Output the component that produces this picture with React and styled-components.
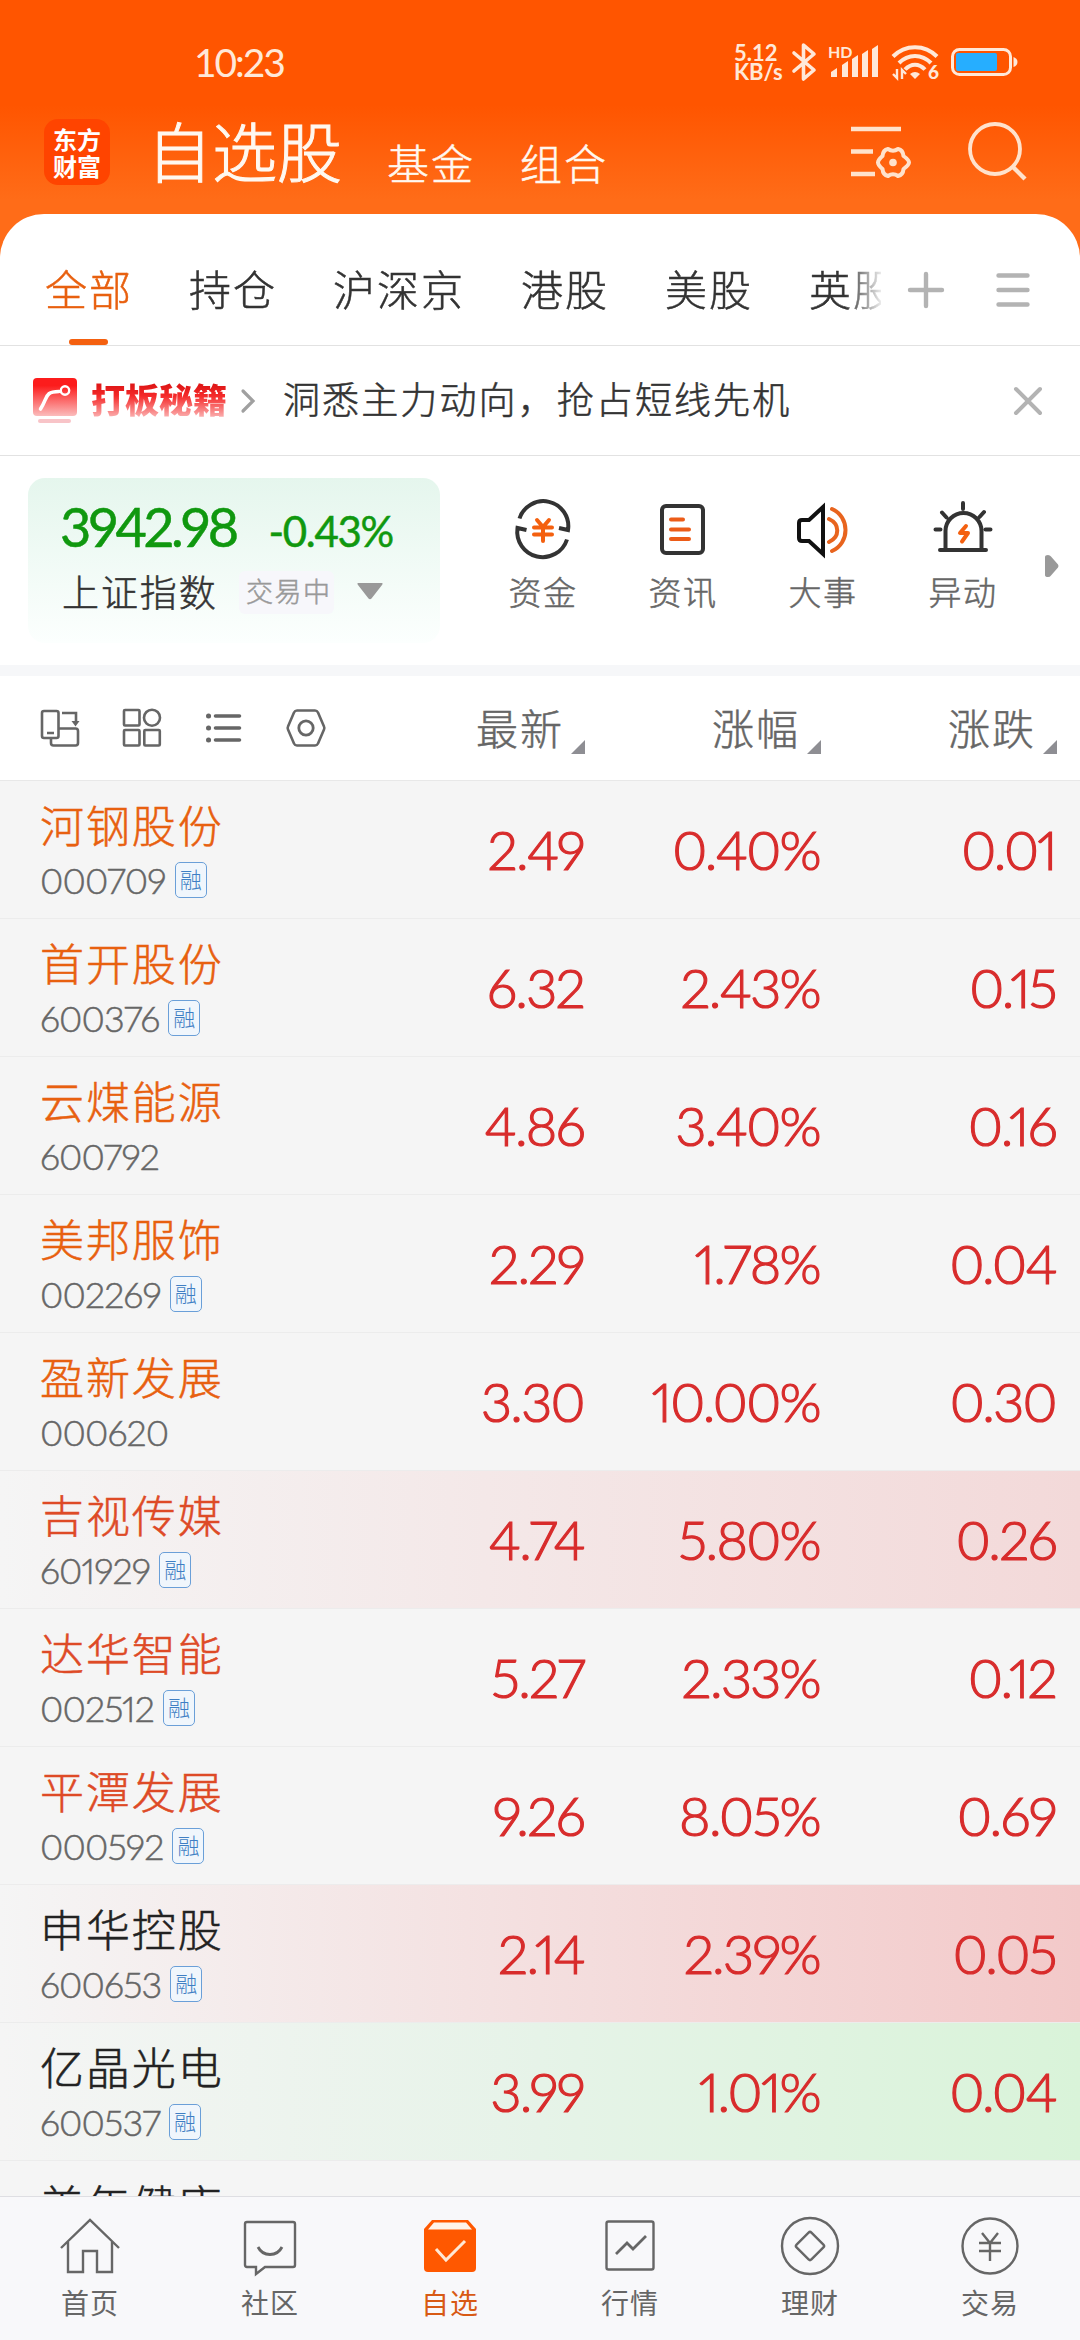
import React from "react";
import styled, { createGlobalStyle } from "styled-components";

const GlobalStyle = createGlobalStyle`
  * {
    box-sizing: border-box;
  }
  body {
    margin: 0;
    background: #f5f5f5;
    font-family: "Noto Sans CJK SC", "Noto Sans", sans-serif;
    font-weight: 300;
    color: #333;
    -webkit-text-stroke: 0.5px currentColor;
  }
  svg {
    display: block;
    flex: none;
    overflow: visible;
  }
`;

const Screen = styled.div`
  display: flex;
  flex-direction: column;
  width: 1080px;
  height: 2340px;
  overflow: hidden;
  background: linear-gradient(#ff5500 105px, #ff6c18 200px, #ff6c18 300px, #f5f5f5 300px);
`;

const StatusBar = styled.div`
  display: flex;
  align-items: center;
  height: 124px;
  padding: 0 61px 0 194px;
  color: #ffe8d8;
  -webkit-text-stroke: 0;
`;

const Clock = styled.div`
  flex: 1;
  font-family: Lato, sans-serif;
  font-weight: 400;
  font-size: 39px;
  letter-spacing: -2.1px;
`;

const NetSpeed = styled.div`
  display: flex;
  flex-direction: column;
  width: 58px;
  font-family: Lato, sans-serif;
  font-weight: 700;
  font-size: 22px;
  line-height: 19px;
`;

const StatusIcons = styled.div`
  display: flex;
  align-items: center;
  gap: 13px;
`;

const TitleBar = styled.div`
  display: flex;
  height: 90px;
  padding: 0 52px 0 44px;
`;

const Logo = styled.div`
  display: flex;
  flex-direction: column;
  width: 66px;
  height: 66px;
  margin: -5px 40px 0 0;
  padding-top: 6px;
  border-radius: 14px;
  background: #ff4400;
  color: #fff;
  font-weight: 700;
  font-size: 24px;
  line-height: 27px;
  text-align: center;
  -webkit-text-stroke: 0;
`;

const Titles = styled.div`
  display: flex;
  flex: 1;
  align-items: flex-end;
  gap: 45px;
  height: 90px;
  margin-top: -20px;
  color: #fff8f0;
`;

const Title = styled.span`
  margin-left: ${(p) => (p.$main ? -3 : 0)}px;
  font-size: ${(p) => (p.$main ? 65 : 42)}px;
  line-height: ${(p) => (p.$main ? 90 : 65)}px;
  letter-spacing: ${(p) => (p.$main ? 0 : 2)}px;
  ${(p) => p.$main && "-webkit-text-stroke: 1px currentColor;"}
`;

const TitleActions = styled.div`
  display: flex;
  gap: 58px;
`;

const Sheet = styled.div`
  flex: 1;
  min-height: 0;
  display: flex;
  flex-direction: column;
  border-radius: 44px 44px 0 0;
  background: #fff;
  overflow: hidden;
`;

const Tabs = styled.div`
  display: flex;
  align-items: center;
  height: 132px;
  flex: none;
  padding-right: 50px;
  border-bottom: 1px solid #e2e2e2;
`;

const TabList = styled.div`
  display: flex;
  gap: 56px;
  width: 881px;
  height: 131px;
  margin-right: 27px;
  padding-left: 45px;
  overflow: hidden;
  mask-image: linear-gradient(90deg, #000 845px, transparent 885px);
`;

const Tab = styled.div`
  display: flex;
  flex-direction: column;
  align-items: center;
  flex: none;
  padding-top: 36px;
  color: ${(p) => (p.$active ? "#e8600f" : "#333")};
  font-size: 42px;
  line-height: 76px;
  height: 131px;
  letter-spacing: 2px;
`;

const TabMark = styled.span`
  width: 39px;
  height: 6px;
  margin: 13px 0 0 -2px;
  border-radius: 3px;
  background: #f4600f;
`;

const TabActions = styled.div`
  display: flex;
  flex: 1;
  align-items: center;
  justify-content: space-between;
  margin-top: 21px;
  height: 40px;
`;

const Promo = styled.div`
  display: flex;
  align-items: center;
  flex: none;
  height: 110px;
  padding: 0 38px 0 33px;
  border-bottom: 1px solid #e2e2e2;
`;

const PromoName = styled.span`
  margin: -3px 14px 0 14px;
  font-weight: 900;
  font-size: 34px;
  line-height: 50px;
  background: linear-gradient(#e01818 12px, #f52a2a 22px, #fbb4b4 44px);
  background-clip: text;
  color: transparent;
  -webkit-text-stroke: 0;
`;

const PromoText = styled.span`
  flex: 1;
  margin: -5px 0 0 28px;
  font-size: 37px;
  letter-spacing: 2.1px;
`;

const Market = styled.div`
  display: flex;
  flex: none;
  height: 220px;
  padding: 22px 20px 0 28px;
  border-bottom: 11px solid #f6f7f9;
`;

const IndexCard = styled.div`
  flex: none;
  width: 412px;
  height: 165px;
  padding: 20px 0 0 34px;
  border-radius: 17px;
  background: linear-gradient(#e5f6ed, #fcfffe);
`;

const IndexNumbers = styled.div`
  display: flex;
  align-items: baseline;
  gap: 33px;
  height: 62px;
  margin-left: -2px;
  color: #10980f;
  font-family: Lato, sans-serif;
  font-weight: 400;
  line-height: 58px;
`;

const IndexValue = styled.span`
  font-size: 54px;
  letter-spacing: -3.6px;
`;

const IndexChange = styled.span`
  font-size: 42px;
  letter-spacing: -1.3px;
`;

const IndexMeta = styled.div`
  display: flex;
  align-items: center;
  height: 62px;
`;

const IndexName = styled.span`
  width: 177px;
  font-size: 37px;
  letter-spacing: 1.9px;
`;

const TradeState = styled.span`
  width: 95px;
  height: 43px;
  margin: 3px 23px 0 0;
  padding-left: 7px;
  border-radius: 6px;
  background: #f7f7fb;
  color: #999;
  font-size: 27px;
  line-height: 40px;
  letter-spacing: 1.5px;
`;

const Shortcuts = styled.div`
  display: flex;
  flex: none;
  width: 560px;
  margin-left: 33px;
  padding-top: 22px;
`;

const Shortcut = styled.div`
  display: flex;
  flex-direction: column;
  align-items: center;
  width: 140px;
  color: #666;
  font-size: 33px;
  line-height: 48px;
  letter-spacing: 1.5px;

  svg {
    margin-bottom: 7px;
  }
`;

const MoreArrow = styled.div`
  margin: 77px 0 0 12px;
`;

const ListHead = styled.div`
  display: grid;
  grid-template-columns: 1fr 236px 236px 236px;
  align-items: center;
  flex: none;
  height: 105px;
  padding-right: 23px;
  border-bottom: 1px solid #e8e8e8;
`;

const ViewTools = styled.div`
  display: flex;
  gap: 42px;
  padding-left: 40px;
`;

const ColumnLabel = styled.div`
  display: flex;
  align-items: center;
  justify-content: flex-end;
  gap: 7px;
  height: 90px;
  padding-bottom: 3px;
  color: #666;
  font-size: 42px;
  line-height: 80px;
  letter-spacing: 2px;

  svg {
    margin-top: 40px;
  }
`;

const List = styled.div`
  flex: 1;
  min-height: 0;
  overflow: hidden;
  background: #f5f5f5;
`;

const flashes = {
  softRed: "linear-gradient(90deg, #f5f5f5, #f4e8e8 45%, #f3d9d9)",
  red: "linear-gradient(90deg, #f5f5f5, #f4dfdf 50%, #f3c9c9)",
  green: "linear-gradient(90deg, #f5f5f5, #e6f3e8 50%, #d9f3d9)",
};

const Row = styled.div`
  display: grid;
  grid-template-columns: 1fr 236px 236px 236px;
  height: 138px;
  padding: 0 24px 0 40px;
  border-bottom: 1px solid #ececec;
  background: ${(p) => flashes[p.$flash] || "none"};
`;

const StockName = styled.div`
  margin-top: 13px;
  color: ${(p) => p.$color};
  font-size: 44px;
  line-height: 60px;
  letter-spacing: 1.9px;
  white-space: nowrap;
`;

const StockCode = styled.div`
  display: flex;
  align-items: center;
  gap: 9px;
  height: 51px;
  color: #666;
  font-family: Lato, sans-serif;
  font-feature-settings: "pnum";
  font-size: 36px;
  letter-spacing: -0.9px;
`;

const MarginTag = styled.span`
  width: 32px;
  height: 36px;
  border: 1.5px solid #6a9fd8;
  border-radius: 5px;
  background: #f0f6fc;
  color: #3f7fc4;
  font-family: "Noto Sans CJK SC", sans-serif;
  font-size: 22px;
  line-height: 31px;
  text-align: center;
  letter-spacing: 0;
  -webkit-text-stroke: 0;
`;

const Value = styled.div`
  color: #d82c2c;
  font-family: Lato, sans-serif;
  font-feature-settings: "pnum";
  font-size: 54px;
  line-height: 138px;
  letter-spacing: -1.7px;
  text-align: right;
  -webkit-text-stroke: 1.2px currentColor;
`;

const NavBar = styled.div`
  display: flex;
  flex: none;
  height: 144px;
  border-top: 1px solid #dedee2;
  background: #f8f8fa;
`;

const NavItem = styled.div`
  display: flex;
  flex-direction: column;
  align-items: center;
  width: 180px;
  padding-top: 19px;
  color: ${(p) => (p.$active ? "#d85a14" : "#666")};
  font-weight: 400;
  font-size: 28px;
  line-height: 40px;
  letter-spacing: 1px;
  -webkit-text-stroke: 0;

  svg {
    margin-bottom: 6px;
  }
`;

const NavIcon = ({ children }) => (
  <svg width="60" height="60" viewBox="0 0 60 60" fill="none" stroke="#666" strokeWidth="2.4">
    {children}
  </svg>
);

const ShortcutIcon = ({ children }) => (
  <svg width="60" height="60" viewBox="0 0 60 60" fill="none" stroke="#333" strokeWidth="4" strokeLinecap="round" strokeLinejoin="round">
    {children}
  </svg>
);

const ToolIcon = ({ children }) => (
  <svg width="40" height="40" viewBox="0 0 40 40" fill="none" stroke="#666" strokeWidth="2.6">
    {children}
  </svg>
);

const tabs = ["全部", "持仓", "沪深京", "港股", "美股", "英股"];

const shortcuts = [
  {
    label: "资金",
    icon: (
      <>
        <path d="M6.500 18.500 A25 25 0 0 1 55 30 L46 28" strokeLinecap="butt" strokeLinejoin="miter" />
        <path d="M54 39.500 A25.500 25.500 0 0 1 4.500 28 L13.500 30" strokeLinecap="butt" strokeLinejoin="miter" />
        <path d="M24 20 l6 7 6 -7 M21 27.500 h18 M21 34.500 h18 M30 27 v14" stroke="#f4600f" />
      </>
    ),
  },
  {
    label: "资讯",
    icon: (
      <>
        <rect x="9" y="6" width="41" height="47" rx="4" />
        <path d="M18 19.500 h12 M18 29.500 h18 M18 39 h18" stroke="#ec5c18" />
      </>
    ),
  },
  {
    label: "大事",
    icon: (
      <>
        <path d="M30 7 v47 l-14 -13 h-7 q-3 0 -3 -3 v-15 q0 -3 3 -3 h7 z" stroke="#111" strokeLinejoin="miter" />
        <path d="M36 19 c11 5 11 18 0 23 M39 9 c18 8 18 34 0 42" stroke="#e8641e" />
      </>
    ),
  },
  {
    label: "异动",
    icon: (
      <>
        <path d="M12.500 49 v-18 a18 18 0 0 1 36 0 v18 M7 50 h46 M30 3 v6 M9 12.500 l4.500 5 M51 12 l-4.500 5 M2.500 29.500 h5 M52.500 29.500 h5" />
        <path d="M33 26 l-6 7 h8 l-6 8.500" stroke="#f4600f" strokeWidth="4" />
      </>
    ),
  },
];

const stocks = [
  { name: "河钢股份", code: "000709", margin: true, price: "2.49", pct: "0.40%", change: "0.01", color: "#e8600f" },
  { name: "首开股份", code: "600376", margin: true, price: "6.32", pct: "2.43%", change: "0.15", color: "#e8600f" },
  { name: "云煤能源", code: "600792", price: "4.86", pct: "3.40%", change: "0.16", color: "#e8600f" },
  { name: "美邦服饰", code: "002269", margin: true, price: "2.29", pct: "1.78%", change: "0.04", color: "#e8600f" },
  { name: "盈新发展", code: "000620", price: "3.30", pct: "10.00%", change: "0.30", color: "#e8600f" },
  { name: "吉视传媒", code: "601929", margin: true, price: "4.74", pct: "5.80%", change: "0.26", color: "#de4a26", flash: "softRed" },
  { name: "达华智能", code: "002512", margin: true, price: "5.27", pct: "2.33%", change: "0.12", color: "#de4a26" },
  { name: "平潭发展", code: "000592", margin: true, price: "9.26", pct: "8.05%", change: "0.69", color: "#de4a26" },
  { name: "申华控股", code: "600653", margin: true, price: "2.14", pct: "2.39%", change: "0.05", color: "#222", flash: "red" },
  { name: "亿晶光电", code: "600537", margin: true, price: "3.99", pct: "1.01%", change: "0.04", color: "#222", flash: "green" },
  { name: "美年健康", color: "#222" },
];

const navItems = [
  {
    label: "首页",
    icon: <path d="M1 32 L30 4 L59 32 M8 26 V56 H23 V35 H37 V56 H52 V26" />,
  },
  {
    label: "社区",
    icon: (
      <>
        <path d="M7 6 h46 q2 0 2 2 v41 q0 2 -2 2 h-28 l-9 7 v-7 h-9 q-2 0 -2 -2 v-41 q0 -2 2 -2 z" />
        <path d="M18 31 c5 10 19 10 24 0" strokeWidth="2.800" />
      </>
    ),
  },
  {
    label: "自选",
    active: true,
    icon: (
      <>
        <path d="M4 13 l8 -9 h36 l8 9 v39 q0 4 -4 4 h-44 q-4 0 -4 -4 z" fill="#ff5800" stroke="none" />
        <path d="M8 13.500 l6 -7 h32 l6 7 z" fill="#fff4ea" stroke="none" />
        <path d="M16 33 l10 11 L45 25" stroke="#ffe8d4" strokeWidth="3" />
      </>
    ),
  },
  {
    label: "行情",
    icon: (
      <>
        <rect x="6.500" y="5.500" width="47" height="48" rx="2" />
        <path d="M16 38 l11 -11 6 6 13 -13" strokeWidth="2.800" />
      </>
    ),
  },
  {
    label: "理财",
    icon: (
      <>
        <circle cx="30" cy="30" r="28" />
        <rect x="19.500" y="19.500" width="21" height="21" rx="2" transform="rotate(45 30 30)" />
      </>
    ),
  },
  {
    label: "交易",
    icon: (
      <>
        <circle cx="30" cy="30" r="27.500" />
        <path d="M22 17 l8 10 8 -10 M19 27 h22 M19 35 h22 M30 27 v18" />
      </>
    ),
  },
];

function BluetoothIcon() {
  return (
    <svg width="24" height="38" viewBox="0 0 24 38" fill="none" stroke="currentColor" strokeWidth="3.600" strokeLinejoin="round" strokeLinecap="round">
      <path d="M2 10 L22 27 L11.500 36 V2 L22 11 L2 28" />
    </svg>
  );
}

function SignalIcon() {
  return (
    <svg width="50" height="34" viewBox="0 0 50 34" fill="currentColor">
      <text x="-1" y="13" fontFamily="Lato" fontWeight="700" fontSize="16">HD</text>
      <path d="M2 27 l6 -4 v9 h-6 z M13 20 l6 -4 v16 h-6 z M23 14 l6 -4 v22 h-6 z M33 9 l6 -4 v27 h-6 z M43 4 l6 -4 v32 h-6 z" />
    </svg>
  );
}

function WifiIcon() {
  return (
    <svg width="46" height="36" viewBox="0 0 46 36" fill="none" stroke="currentColor" strokeWidth="4">
      <path d="M1 12.500 C13 0 33 0 45 12.500" />
      <path d="M7 19 C16 9.500 30 9.500 39 19" />
      <path d="M13 25.500 C19 19 27 19 33 25.500" />
      <path d="M18 30 q5 -4 10 0 l-5 5 z" fill="currentColor" stroke="none" />
      <path d="M1 30 l4 4 v-9 M10 35 v-9 l4 4" strokeWidth="2.400" />
      <text x="36" y="35" fontFamily="Lato" fontWeight="900" fontSize="19" fill="currentColor" stroke="none">6</text>
    </svg>
  );
}

function BatteryIcon() {
  return (
    <svg width="68" height="30" viewBox="0 0 68 30" fill="none">
      <rect x="1.500" y="2.500" width="58" height="25" rx="7" stroke="currentColor" strokeWidth="3" />
      <rect x="5" y="6" width="41" height="18" rx="2" fill="#26aeff" />
      <path d="M62.500 10 q4 1.500 4 5 q0 3.500 -4 5 z" fill="currentColor" />
    </svg>
  );
}

function App() {
  return (
    <>
      <GlobalStyle />
      <Screen>
        <StatusBar>
          <Clock>10:23</Clock>
          <NetSpeed>
            <span>5.12</span>
            <span>KB/s</span>
          </NetSpeed>
          <StatusIcons>
            <BluetoothIcon />
            <SignalIcon />
            <WifiIcon />
            <BatteryIcon />
          </StatusIcons>
        </StatusBar>

        <TitleBar>
          <Logo>
            <span>东方</span>
            <span>财富</span>
          </Logo>
          <Titles>
            <Title $main>自选股</Title>
            <Title>基金</Title>
            <Title>组合</Title>
          </Titles>
          <TitleActions>
            <svg width="60" height="60" viewBox="0 0 60 60" fill="none" stroke="#ffe2cc" strokeWidth="4">
              <path d="M1 5 h50 M1 27.500 h22 M1 50 h24" strokeWidth="4.600" />
              <path
                d="M38 25 q5 3.500 10 0 q5 1 5.500 7 q5.500 4 5.500 6.500 q0 2.500 -5.500 6.500 q-0.500 6 -5.500 7 q-5 -3.500 -10 0 q-5 -1 -5.500 -7 q-4.500 -4 -4.500 -6.500 q0 -2.500 4.500 -6.500 q0.500 -6 5.500 -7 z"
                strokeLinejoin="round"
              />
              <circle cx="43" cy="38.500" r="3.800" fill="#ffe2cc" stroke="none" />
            </svg>
            <svg width="60" height="60" viewBox="0 0 60 60" fill="none" stroke="#ffe2cc" strokeWidth="3.800">
              <circle cx="27" cy="25" r="25" />
              <path d="M44 42 L57 55" strokeWidth="4.400" />
            </svg>
          </TitleActions>
        </TitleBar>

        <Sheet>
          <Tabs>
            <TabList>
              {tabs.map((tab, i) => (
                <Tab key={tab} $active={i === 0}>
                  {tab}
                  {i === 0 && <TabMark />}
                </Tab>
              ))}
            </TabList>
            <TabActions>
              <svg width="36" height="36" viewBox="0 0 36 36" stroke="#b3b3b3" strokeWidth="4.400" strokeLinecap="round">
                <path d="M18 2 V34 M2 18 H34" />
              </svg>
              <svg width="34" height="34" viewBox="0 0 34 34" stroke="#b3b3b3" strokeWidth="4.400" strokeLinecap="round">
                <path d="M2.500 2.500 h29 M2.500 17 h29 M2.500 31.500 h29" />
              </svg>
            </TabActions>
          </Tabs>

          <Promo>
            <svg width="44" height="46" viewBox="0 0 44 46">
              <defs>
                <linearGradient id="promo" x1="0" y1="0" x2="0" y2="1">
                  <stop offset="0.200" stopColor="#fc1c1c" />
                  <stop offset="1" stopColor="#fbbcbc" />
                </linearGradient>
              </defs>
              <rect y="0" width="44" height="38" rx="4" fill="url(#promo)" />
              <rect x="5" y="41" width="33" height="4" rx="2" fill="#f8c4c8" />
              <path d="M7.500 31 C15 20 11 13.500 26 13.500" stroke="#fff" strokeWidth="3.600" fill="none" strokeLinecap="round" />
              <circle cx="32" cy="12.500" r="4.200" stroke="#fff" strokeWidth="2.400" fill="none" />
            </svg>
            <PromoName>打板秘籍</PromoName>
            <svg width="14" height="24" viewBox="0 0 14 24" fill="none" stroke="#a0a0a0" strokeWidth="3.200" strokeLinecap="round">
              <path d="M2 2 L12 12 L2 22" />
            </svg>
            <PromoText>洞悉主力动向，抢占短线先机</PromoText>
            <svg width="28" height="28" viewBox="0 0 28 28" stroke="#b3b3b3" strokeWidth="4" strokeLinecap="round">
              <path d="M2 2 L26 26 M26 2 L2 26" />
            </svg>
          </Promo>

          <Market>
            <IndexCard>
              <IndexNumbers>
                <IndexValue>3942.98</IndexValue>
                <IndexChange>-0.43%</IndexChange>
              </IndexNumbers>
              <IndexMeta>
                <IndexName>上证指数</IndexName>
                <TradeState>交易中</TradeState>
                <svg width="26" height="17" viewBox="0 0 26 17" fill="#999">
                  <path d="M1 0 H25 q1.500 0.500 0 2 L14.500 15.500 q-1.500 1.500 -3 0 L1 2 q-1.500 -1.500 0 -2 z" />
                </svg>
              </IndexMeta>
            </IndexCard>
            <Shortcuts>
              {shortcuts.map((item) => (
                <Shortcut key={item.label}>
                  <ShortcutIcon>{item.icon}</ShortcutIcon>
                  {item.label}
                </Shortcut>
              ))}
            </Shortcuts>
            <MoreArrow>
              <svg width="14" height="22" viewBox="0 0 14 22" fill="#999">
                <path d="M0 2 q0 -2 3 -2 q2 0 3 1.500 L13 9.500 q1 1.500 0 3 L6 20.500 q-1 1.500 -3 1.500 q-3 0 -3 -2 z" />
              </svg>
            </MoreArrow>
          </Market>

          <ListHead>
            <ViewTools>
              <ToolIcon>
                <path d="M11 30 v5 q0 2.500 2.500 2.500 h22 q2.500 0 2.500 -2.500 v-12 q0 -2.500 -2.500 -2.500 h-17" />
                <rect x="2" y="3" width="16.500" height="27" rx="2" />
                <path d="M7 25 h7 M22 5 h14 v10" />
                <path d="M31.500 13 h8 l-4 5.500 z" fill="#666" stroke="none" />
              </ToolIcon>
              <ToolIcon>
                <rect x="2" y="2" width="15.500" height="15.500" rx="1" />
                <circle cx="30" cy="9.700" r="8" />
                <rect x="2" y="22" width="15.500" height="15.500" rx="1" />
                <rect x="22.300" y="22" width="15.500" height="15.500" rx="1" />
              </ToolIcon>
              <ToolIcon>
                <path d="M11.500 8 h24 M11.500 20 h24 M11.500 32 h24" strokeWidth="3.600" strokeLinecap="round" />
                <path d="M4.500 8 h0.100 M4.500 20 h0.100 M4.500 32 h0.100" strokeWidth="5" strokeLinecap="round" />
              </ToolIcon>
              <ToolIcon>
                <path d="M11 2.500 h18 q2 0 3 2 l6 14 q0.700 1.500 0 3 l-6 14 q-1 2 -3 2 h-18 q-2 0 -3 -2 l-6 -14 q-0.700 -1.500 0 -3 l6 -14 q1 -2 3 -2 z" />
                <circle cx="20" cy="20" r="7.200" strokeWidth="2.800" />
              </ToolIcon>
            </ViewTools>
            {["最新", "涨幅", "涨跌"].map((label) => (
              <ColumnLabel key={label}>
                {label}
                <svg width="14" height="14" viewBox="0 0 14 14" fill="#8e8e93">
                  <path d="M14 0 V14 H0 z" />
                </svg>
              </ColumnLabel>
            ))}
          </ListHead>

          <List>
            {stocks.map((s) => (
              <Row key={s.name} $flash={s.flash}>
                <div>
                  <StockName $color={s.color}>{s.name}</StockName>
                  <StockCode>
                    {s.code}
                    {s.margin && <MarginTag>融</MarginTag>}
                  </StockCode>
                </div>
                <Value>{s.price}</Value>
                <Value>{s.pct}</Value>
                <Value>{s.change}</Value>
              </Row>
            ))}
          </List>

          <NavBar>
            {navItems.map((item) => (
              <NavItem key={item.label} $active={item.active}>
                <NavIcon>{item.icon}</NavIcon>
                {item.label}
              </NavItem>
            ))}
          </NavBar>
        </Sheet>
      </Screen>
    </>
  );
}

export default App;
